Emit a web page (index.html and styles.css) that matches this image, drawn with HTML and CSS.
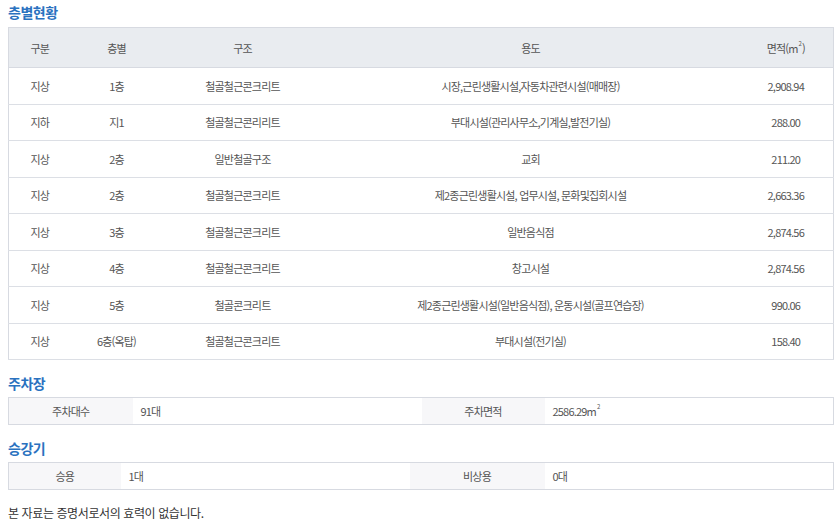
FILE: index.html
```html
<!DOCTYPE html>
<html lang="ko">
<head>
<meta charset="utf-8">
<title>층별현황</title>
<link rel="stylesheet" href="styles.css">
</head>
<body>
<div class="page">
  <h2 class="sec-title first">층별현황</h2>
  <table class="floor-table">
    <colgroup>
      <col class="c1"><col class="c2"><col class="c3"><col class="c4"><col class="c5">
    </colgroup>
    <thead>
      <tr><th>구분</th><th>층별</th><th>구조</th><th>용도</th><th>면적(m<sup>2</sup>)</th></tr>
    </thead>
    <tbody>
      <tr><td>지상</td><td>1층</td><td>철골철근콘크리트</td><td>시장,근린생활시설,자동차관련시설(매매장)</td><td>2,908.94</td></tr>
      <tr><td>지하</td><td>지1</td><td>철골철근콘리리트</td><td>부대시설(관리사무소,기계실,발전기실)</td><td>288.00</td></tr>
      <tr><td>지상</td><td>2층</td><td>일반철골구조</td><td>교회</td><td>211.20</td></tr>
      <tr><td>지상</td><td>2층</td><td>철골철근콘크리트</td><td>제2종근린생활시설, 업무시설, 문화및집회시설</td><td>2,663.36</td></tr>
      <tr><td>지상</td><td>3층</td><td>철골철근콘크리트</td><td>일반음식점</td><td>2,874.56</td></tr>
      <tr><td>지상</td><td>4층</td><td>철골철근콘크리트</td><td>창고시설</td><td>2,874.56</td></tr>
      <tr><td>지상</td><td>5층</td><td>철골콘크리트</td><td>제2종근린생활시설(일반음식점), 운동시설(골프연습장)</td><td>990.06</td></tr>
      <tr><td>지상</td><td>6층(옥탑)</td><td>철골철근콘크리트</td><td>부대시설(전기실)</td><td>158.40</td></tr>
    </tbody>
  </table>

  <h2 class="sec-title">주차장</h2>
  <table class="info-table">
    <colgroup>
      <col class="p1"><col class="p2"><col class="p3"><col class="p4">
    </colgroup>
    <tr><th>주차대수</th><td>91대</td><th>주차면적</th><td>2586.29m<sup>2</sup></td></tr>
  </table>

  <h2 class="sec-title">승강기</h2>
  <table class="info-table">
    <colgroup>
      <col class="e1"><col class="e2"><col class="e3"><col class="e4">
    </colgroup>
    <tr><th>승용</th><td>1대</td><th>비상용</th><td>0대</td></tr>
  </table>

  <p class="note">본 자료는 증명서로서의 효력이 없습니다.</p>
</div>
</body>
</html>
```

FILE: styles.css
```css
* { box-sizing: border-box; }
html, body { margin: 0; padding: 0; background: #fff; }
body {
  font-family: "Noto Sans CJK KR", "Noto Sans", sans-serif;
  color: #555;
}
.page { padding: 0 7px 0 8px; width: 840px; }

.sec-title {
  margin: 13px 0 4px;
  font-size: 14px;
  line-height: 20px;
  font-weight: 700;
  color: #2a72bf;
  letter-spacing: -0.5px;
}
.sec-title.first { margin-top: 2px; margin-bottom: 5px; }

table { border-collapse: collapse; width: 825px; table-layout: fixed; }

.floor-table { border: 1px solid #d7dae1; }
.floor-table .c1 { width: 62px; }
.floor-table .c2 { width: 92px; }
.floor-table .c3 { width: 160px; }
.floor-table .c4 { width: 416px; }
.floor-table .c5 { width: 95px; }

.floor-table th, .floor-table td {
  text-align: center;
  font-size: 11px;
  letter-spacing: -0.8px;
  font-weight: 400;
  color: #555;
  padding: 0;
  white-space: nowrap;
}
.floor-table th {
  background: #e9ecf0;
  height: 40px;
  border-bottom: 1px solid #d7dae1;
}
.floor-table td {
  height: 36.5px;
  border-bottom: 1px solid #dcdfe5;
}
sup { font-size: 6px; vertical-align: top; position: relative; top: -1px; letter-spacing: 0; margin-left: 1px; }

.info-table { border: 1px solid #d7dae1; }
.info-table th, .info-table td {
  height: 27px;
  font-size: 11px;
  letter-spacing: -0.8px;
  font-weight: 400;
  color: #555;
  padding: 0;
  white-space: nowrap;
}
.info-table th { background: #f7f7f9; text-align: center; }
.info-table td { text-align: left; padding-left: 8px; }
.p1 { width: 124px; } .p2 { width: 289px; } .p3 { width: 123px; } .p4 { width: 289px; }
.e1 { width: 112px; } .e2 { width: 289px; } .e3 { width: 135px; } .e4 { width: 289px; }

.note {
  margin: 13px 0 0;
  font-size: 12px;
  line-height: 20px;
  color: #333;
  letter-spacing: -0.4px;
}
```
